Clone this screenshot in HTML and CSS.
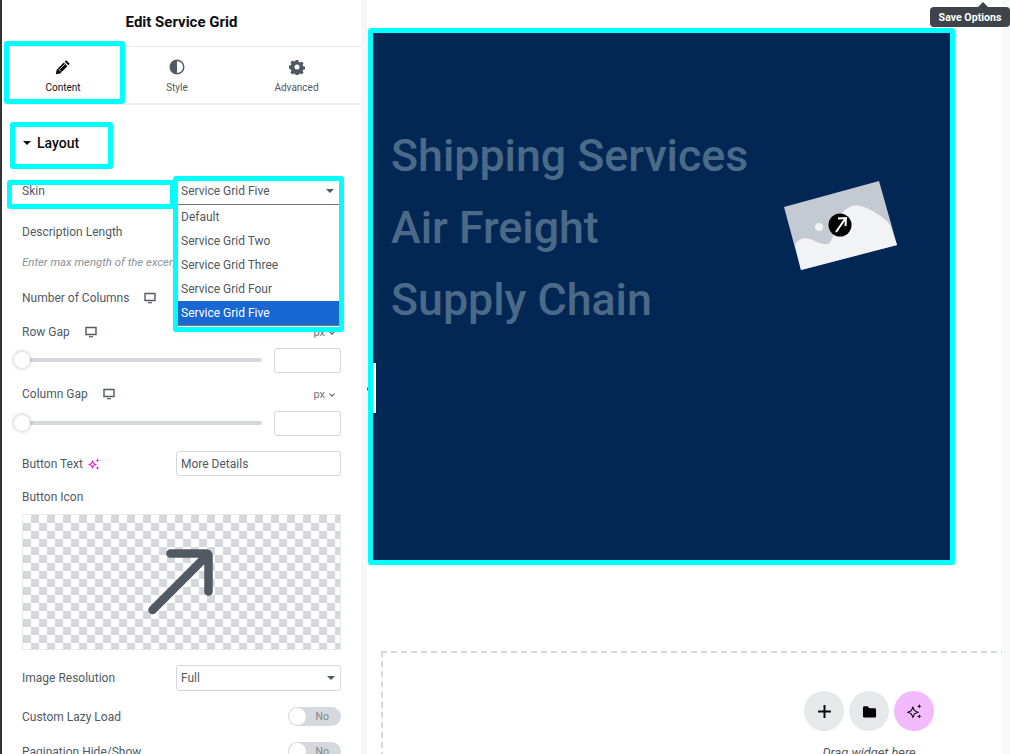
FILE: index.html
```html
<!DOCTYPE html>
<html>
    <head>
        <meta charset="utf-8">
        <title>Edit Service Grid</title>
        <link rel="stylesheet" href="styles.css">
    </head>
    <body>
        <aside class="panel">
            <h2 class="panel-title">Edit Service Grid</h2>

            <nav class="tabs">
                <div class="tab tab-active mark">
                    <svg class="tab-icon" viewBox="0 0 16 16"><path d="M11.2 1.2l3.6 3.6-1.5 1.5-3.6-3.6zM8.8 3.6l3.6 3.6-7.2 7.2-4.4.9.9-4.5z" fill="#0c0d0e"/><path d="M3.4 9.9l2.7 2.7M9.8 5.2L4.7 10.3" stroke="#fff" stroke-width=".8"/></svg>
                    <span>Content</span>
                </div>
                <div class="tab tab-style">
                    <svg class="tab-icon" viewBox="0 0 16 16"><circle cx="8" cy="8" r="6.8" fill="none" stroke="#515962" stroke-width="1.4"/><path d="M8 1.2a6.8 6.8 0 0 0 0 13.6z" fill="#515962"/></svg>
                    <span>Style</span>
                </div>
                <div class="tab tab-adv">
                    <svg class="tab-icon" viewBox="0 0 16 16"><path fill-rule="evenodd" fill="#515962" d="M6.6 1h2.8l.4 1.9 1.2.5 1.6-1 2 2-1 1.6.5 1.2 1.9.4v2.800l-1.900.4-.5 1.200 1 1.600-2 2-1.600-1-1.200.5-.4 1.900H6.600l-.4-1.900-1.200-.5-1.600 1-2-2 1-1.600-.5-1.200L0 9.400V6.600l1.900-.4.5-1.200-1-1.600 2-2 1.600 1 1.200-.5zM8 5.500a2.500 2.500 0 1 0 0 5 2.500 2.500 0 0 0 0-5z"/></svg>
                    <span>Advanced</span>
                </div>
            </nav>

            <section class="controls">
                <div class="section-head mark">
                    <i class="caret caret-dark"></i>
                    <span>Layout</span>
                </div>

                <div class="row row-skin">
                    <label class="skin-label mark">Skin</label>
                    <div class="skin-select">
                        <div class="skin-open mark">
                            <div class="skin-value">Service Grid Five<i class="caret"></i></div>
                            <ul class="skin-list">
                                <li>Default</li>
                                <li>Service Grid Two</li>
                                <li>Service Grid Three</li>
                                <li>Service Grid Four</li>
                                <li class="selected">Service Grid Five</li>
                            </ul>
                        </div>
                    </div>
                </div>

                <div class="row row-desc"><label>Description Length</label></div>
                <p class="hint">Enter max mength of the excerpt</p>

                <div class="row row-cols">
                    <label>Number of Columns</label>
                    <svg class="device" viewBox="0 0 12 12"><path d="M1 1.500h10v7H1z" fill="none" stroke="#515962" stroke-width="1.400"/><path d="M4 10.700h4" stroke="#515962" stroke-width="1.200"/></svg>
                </div>

                <div class="row row-gap">
                    <label>Row Gap</label>
                    <svg class="device" viewBox="0 0 12 12"><path d="M1 1.500h10v7H1z" fill="none" stroke="#515962" stroke-width="1.400"/><path d="M4 10.700h4" stroke="#515962" stroke-width="1.200"/></svg>
                    <span class="unit">px<i class="chev"></i></span>
                </div>
                <div class="slider slider-row">
                    <div class="track"><i class="thumb"></i></div>
                    <div class="box"></div>
                </div>

                <div class="row row-colgap">
                    <label>Column Gap</label>
                    <svg class="device" viewBox="0 0 12 12"><path d="M1 1.500h10v7H1z" fill="none" stroke="#515962" stroke-width="1.400"/><path d="M4 10.700h4" stroke="#515962" stroke-width="1.200"/></svg>
                    <span class="unit">px<i class="chev"></i></span>
                </div>
                <div class="slider slider-col">
                    <div class="track"><i class="thumb"></i></div>
                    <div class="box"></div>
                </div>

                <div class="row row-btn">
                    <label>Button Text</label>
                    <svg class="spark" viewBox="0 0 12 12"><path d="M4.500 3.200L5.600 5.400 7.800 6.500 5.600 7.600 4.500 9.800 3.400 7.600 1.200 6.500 3.400 5.400z" fill="none" stroke="#e014e4" stroke-width="1.100"/><path d="M9.500.5l.6 1.400 1.400.6-1.400.6-.6 1.400-.6-1.400-1.400-.6 1.400-.6zM9.500 8l.6 1.400 1.400.6-1.400.6-.6 1.400-.6-1.400-1.400-.6 1.400-.6z" fill="#e014e4"/></svg>
                    <div class="box box-wide">More Details</div>
                </div>

                <div class="row row-icon"><label>Button Icon</label></div>
                <div class="icon-pick">
                    <svg class="pick-arrow" viewBox="0 0 72 72"><path d="M6.500 64L60 10.500M24.500 7.500h36a2 2 0 0 1 2 2v36" fill="none" stroke="#515962" stroke-width="8.500" stroke-linecap="round"/></svg>
                </div>

                <div class="row row-res">
                    <label>Image Resolution</label>
                    <div class="box box-wide">Full<i class="caret"></i></div>
                </div>

                <div class="row row-tog">
                    <label>Custom Lazy Load</label>
                    <div class="toggle"><i></i><span>No</span></div>
                </div>
                <div class="row row-tog">
                    <label>Pagination Hide/Show</label>
                    <div class="toggle"><i></i><span>No</span></div>
                </div>
            </section>
        </aside>

        <main class="preview">
            <div class="handle"><i></i></div>

            <div class="grid-block mark">
                <ul class="services">
                    <li>Shipping Services</li>
                    <li>Air Freight</li>
                    <li>Supply Chain</li>
                </ul>
                <svg class="service-img" viewBox="0 0 114 90">
                    <path d="M0 26L95 0l18 64-96 25z" fill="#c3cad1"/>
                    <path d="M17 89L11 64C14 58 20 56 26 58C32 60 37 64 43 63C50 62 50 46 54 38C59 28 68 23 76 25C88 28 100 36 106 44L113 64z" fill="#f1f3f5"/>
                    <circle cx="35" cy="46" r="4" fill="#f1f3f5"/>
                    <circle cx="56" cy="44" r="11.500" fill="#000"/>
                    <path d="M52 51L61 38M54 37.500l8-.5-.5 8" fill="none" stroke="#fff" stroke-width="2"/>
                </svg>
            </div>

            <div class="dropzone">
                <div class="drop-btns">
                    <span class="drop-btn">
                        <svg viewBox="0 0 14 14"><path d="M7 1v12M1 7h12" stroke="#000" stroke-width="1.800"/></svg>
                    </span>
                    <span class="drop-btn">
                        <svg viewBox="0 0 16 14"><path d="M1 3a1.500 1.500 0 0 1 1.500-1.500h3.500l2 2h5.500A1.500 1.500 0 0 1 15 5v7a1.500 1.500 0 0 1-1.500 1.500h-11A1.500 1.500 0 0 1 1 12z" fill="#000"/></svg>
                    </span>
                    <span class="drop-btn drop-ai">
                        <svg viewBox="0 0 16 16"><path d="M6.500 4l1.500 3.200 3.200 1.500-3.200 1.500-1.500 3.200L5 10.200 1.800 8.700 5 7.200z" fill="none" stroke="#000" stroke-width="1"/><path d="M12.500 1l.6 1.500 1.500.6-1.500.6-.6 1.500-.6-1.500-1.500-.6 1.500-.6zM12.500 10.500l.6 1.500 1.500.6-1.500.6-.6 1.500-.6-1.500-1.500-.6 1.500-.6z" fill="#000"/></svg>
                    </span>
                </div>
                <p class="drop-text">Drag widget here</p>
            </div>
        </main>

        <div class="tooltip">Save Options</div>
    </body>
</html>
```

FILE: styles.css
```css
html, body {
    height: 100%;
}

body {
    position: relative;
    margin: 0;
    height: 754px;
    display: flex;
    overflow: hidden;
    font-family: Roboto, sans-serif;
    font-size: 12px;
    color: #515962;
    background-color: #f8f9fa;
}

/* cyan frame drawn on top of the real elements */
.mark::after {
    content: "";
    position: absolute;
    top: -5px;
    right: -5px;
    bottom: -5px;
    left: -5px;
    border: 5px solid #00ffff;
    border-radius: 3px;
    pointer-events: none;
    z-index: 2;
}

/* ---- left panel ---- */
.panel {
    width: 361px;
    flex: none;
    box-sizing: border-box;
    border-left: 2px solid #333;
    background-color: #fff;
}

.panel-title {
    margin: 0;
    height: 46px;
    line-height: 44px;
    text-align: center;
    font-size: 15px;
    font-weight: 700;
    color: #0c0d0e;
    border-bottom: 1px solid #e6e8ea;
}

.tabs {
    display: flex;
    height: 56px;
    border-bottom: 2px solid #f1f2f3;
}

.tab {
    position: relative;
    display: flex;
    flex-direction: column;
    align-items: center;
    box-sizing: border-box;
    margin-top: -1px;
    padding-top: 13px;
    font-size: 10px;
    height: 53px;
}

.tab-active {
    width: 111px;
    margin-left: 7px;
    padding-right: 3px;
    color: #0c0d0e;
}

.tab-style {
    width: 114px;
}

.tab-adv {
    width: 125px;
}

.tab-icon {
    width: 16px;
    height: 16px;
    margin-bottom: 7px;
}

.controls {
    padding: 0 20px;
}

.section-head {
    position: relative;
    display: flex;
    align-items: center;
    gap: 6px;
    width: 93px;
    height: 37px;
    margin: 22px 0 0 -7px;
    padding: 0 0 5px 8px;
    box-sizing: border-box;
    font-size: 14px;
    font-weight: 500;
    color: #0c0d0e;
}

.caret {
    width: 0;
    height: 0;
    border-style: solid;
    border-width: 4px 4px 0;
    border-color: #515962 transparent transparent;
    margin-left: auto;
}

.caret-dark {
    border-color: #0c0d0e transparent transparent;
    margin-left: 0;
}

.row {
    display: flex;
    align-items: center;
    height: 20px;
}

.row-skin {
    align-items: flex-start;
    height: 22px;
    margin-top: 17px;
}

.skin-label {
    position: relative;
    width: 158px;
    height: 19px;
    margin: 4px 0 0 -10px;
    padding-left: 10px;
    box-sizing: border-box;
    line-height: 13px;
}

.skin-select {
    margin-left: 8px;
    width: 161px;
    height: 22px;
    position: relative;
}

.skin-open {
    position: absolute;
    top: 0;
    left: 0;
    width: 161px;
    height: 146px;
    background-color: #fff;
    box-shadow: 0 2px 8px rgba(0,0,0,0.25);
    z-index: 3;
}

.skin-value {
    display: flex;
    align-items: center;
    height: 19px;
    padding: 0 5px 4px 3px;
    border-bottom: 1px solid #767676;
}

.skin-list {
    margin: 0;
    padding: 0;
    list-style: none;
    border-bottom: 1px solid #767676;
}

.skin-list li {
    height: 24px;
    line-height: 24px;
    padding-left: 3px;
}

.skin-list .selected {
    background-color: #1967d2;
    color: #fff;
}

.row-desc {
    margin-top: 19px;
}

.hint {
    margin: 13px 0 0;
    height: 14px;
    line-height: 14px;
    font-size: 11.4px;
    font-style: italic;
    color: #8a929a;
    white-space: nowrap;
}

.row-cols {
    margin-top: 19px;
}

.row-gap {
    margin-top: 14px;
}

.row-colgap {
    margin-top: 11px;
}

.row-btn {
    height: 25px;
    margin-top: 15px;
}

.row-icon {
    margin-top: 11px;
}

.row-res {
    height: 26px;
    margin-top: 15px;
}

.row-tog {
    height: 19px;
    margin-top: 16px;
    justify-content: space-between;
}

.device {
    width: 12px;
    height: 12px;
    margin-left: 15px;
}

.spark {
    width: 12px;
    height: 12px;
    margin-left: 5px;
}

.unit {
    margin-left: auto;
    margin-right: 6px;
    font-size: 11px;
    color: #6d7882;
}

.chev {
    display: inline-block;
    width: 3px;
    height: 3px;
    margin: 0 1px 2px 5px;
    border-right: 1px solid #515962;
    border-bottom: 1px solid #515962;
    transform: rotate(45deg);
}

.slider {
    display: flex;
    align-items: center;
    justify-content: space-between;
    height: 25px;
}

.slider-row {
    margin-top: 6px;
}

.slider-col {
    margin-top: 7px;
}

.track {
    position: relative;
    width: 240px;
    height: 4px;
    margin-top: -1px;
    background-color: #d5d8dc;
    border-radius: 2px;
}

.thumb {
    position: absolute;
    left: -8px;
    top: -6px;
    width: 16px;
    height: 16px;
    border-radius: 50%;
    background-color: #fff;
    box-shadow: 0 0 4px rgba(0,0,0,0.3);
}

.box {
    width: 67px;
    height: 25px;
    box-sizing: border-box;
    border: 1px solid #d5d8dc;
    border-radius: 3px;
    background-color: #fff;
}

.box-wide {
    display: flex;
    align-items: center;
    width: 165px;
    height: 100%;
    margin-left: auto;
    padding: 0 5px 0 4px;
}

.icon-pick {
    display: flex;
    align-items: center;
    justify-content: center;
    height: 136px;
    margin-top: 7px;
    box-sizing: border-box;
    border: 1px solid #e6e8ea;
    background-color: #fff;
    background-image: conic-gradient(#d5d8dc 25%, transparent 25% 50%, #d5d8dc 50% 75%, transparent 75%);
    background-size: 16px 16px;
}

.pick-arrow {
    width: 72px;
    height: 72px;
}

.toggle {
    display: flex;
    align-items: center;
    justify-content: space-between;
    box-sizing: border-box;
    width: 53px;
    height: 19px;
    padding: 0 12px 0 1px;
    border-radius: 10px;
    background-color: #d5d8dc;
    font-size: 10.5px;
    color: #7d868e;
}

.toggle i {
    width: 17px;
    height: 17px;
    border-radius: 50%;
    background-color: #fff;
}

/* ---- preview side ---- */
.preview {
    position: relative;
    flex: none;
    width: 641px;
    height: 754px;
    box-sizing: border-box;
    padding: 33px 0 0 6px;
    border-left: 6px solid #f7f7f8;
    background-color: #fff;
    overflow: hidden;
}

.handle {
    position: absolute;
    left: -6px;
    top: 363px;
    width: 15px;
    height: 50px;
    background-color: #fff;
    z-index: 1;
}

.handle i {
    position: absolute;
    left: 5px;
    top: 23px;
    width: 0;
    height: 0;
    border-style: solid;
    border-width: 3px 3px 3px 0;
    border-color: transparent #515962 transparent transparent;
}

.tooltip {
    position: absolute;
    left: 930px;
    top: 7px;
    width: 80px;
    height: 20px;
    line-height: 21px;
    text-align: center;
    font-size: 10.6px;
    font-weight: 700;
    color: #fff;
    background-color: #3f444b;
    border-radius: 4px;
    z-index: 4;
}

.tooltip::before {
    content: "";
    position: absolute;
    left: 48px;
    top: -5px;
    border-style: solid;
    border-width: 0 5px 5px;
    border-color: transparent transparent #3f444b;
}

.grid-block {
    position: relative;
    display: flex;
    justify-content: space-between;
    box-sizing: border-box;
    width: 577px;
    height: 527px;
    padding: 87px 52px 0 18px;
    background-color: #032755;
}

.services {
    margin: 0;
    padding: 0;
    list-style: none;
    font-size: 44.7px;
    font-weight: 500;
    line-height: 72px;
    color: #4b6a88;
}

.service-img {
    width: 114px;
    height: 90px;
    margin-top: 61px;
}

.dropzone {
    width: 976px;
    height: 300px;
    margin: 91px 0 0 8px;
    box-sizing: border-box;
    border: 2px dashed #d5d8dc;
}

.drop-btns {
    display: flex;
    justify-content: center;
    gap: 5px;
    margin-top: 38px;
}

.drop-btn {
    display: flex;
    align-items: center;
    justify-content: center;
    width: 40px;
    height: 40px;
    border-radius: 50%;
    background-color: #e6e8ea;
}

.drop-btn svg {
    width: 15px;
    height: 15px;
}

.drop-ai svg {
    width: 17px;
    height: 17px;
}

.drop-ai {
    background-color: #f3baff;
}

.drop-text {
    margin: 14px 0 0;
    text-align: center;
    font-size: 12.8px;
    font-style: italic;
}
```
